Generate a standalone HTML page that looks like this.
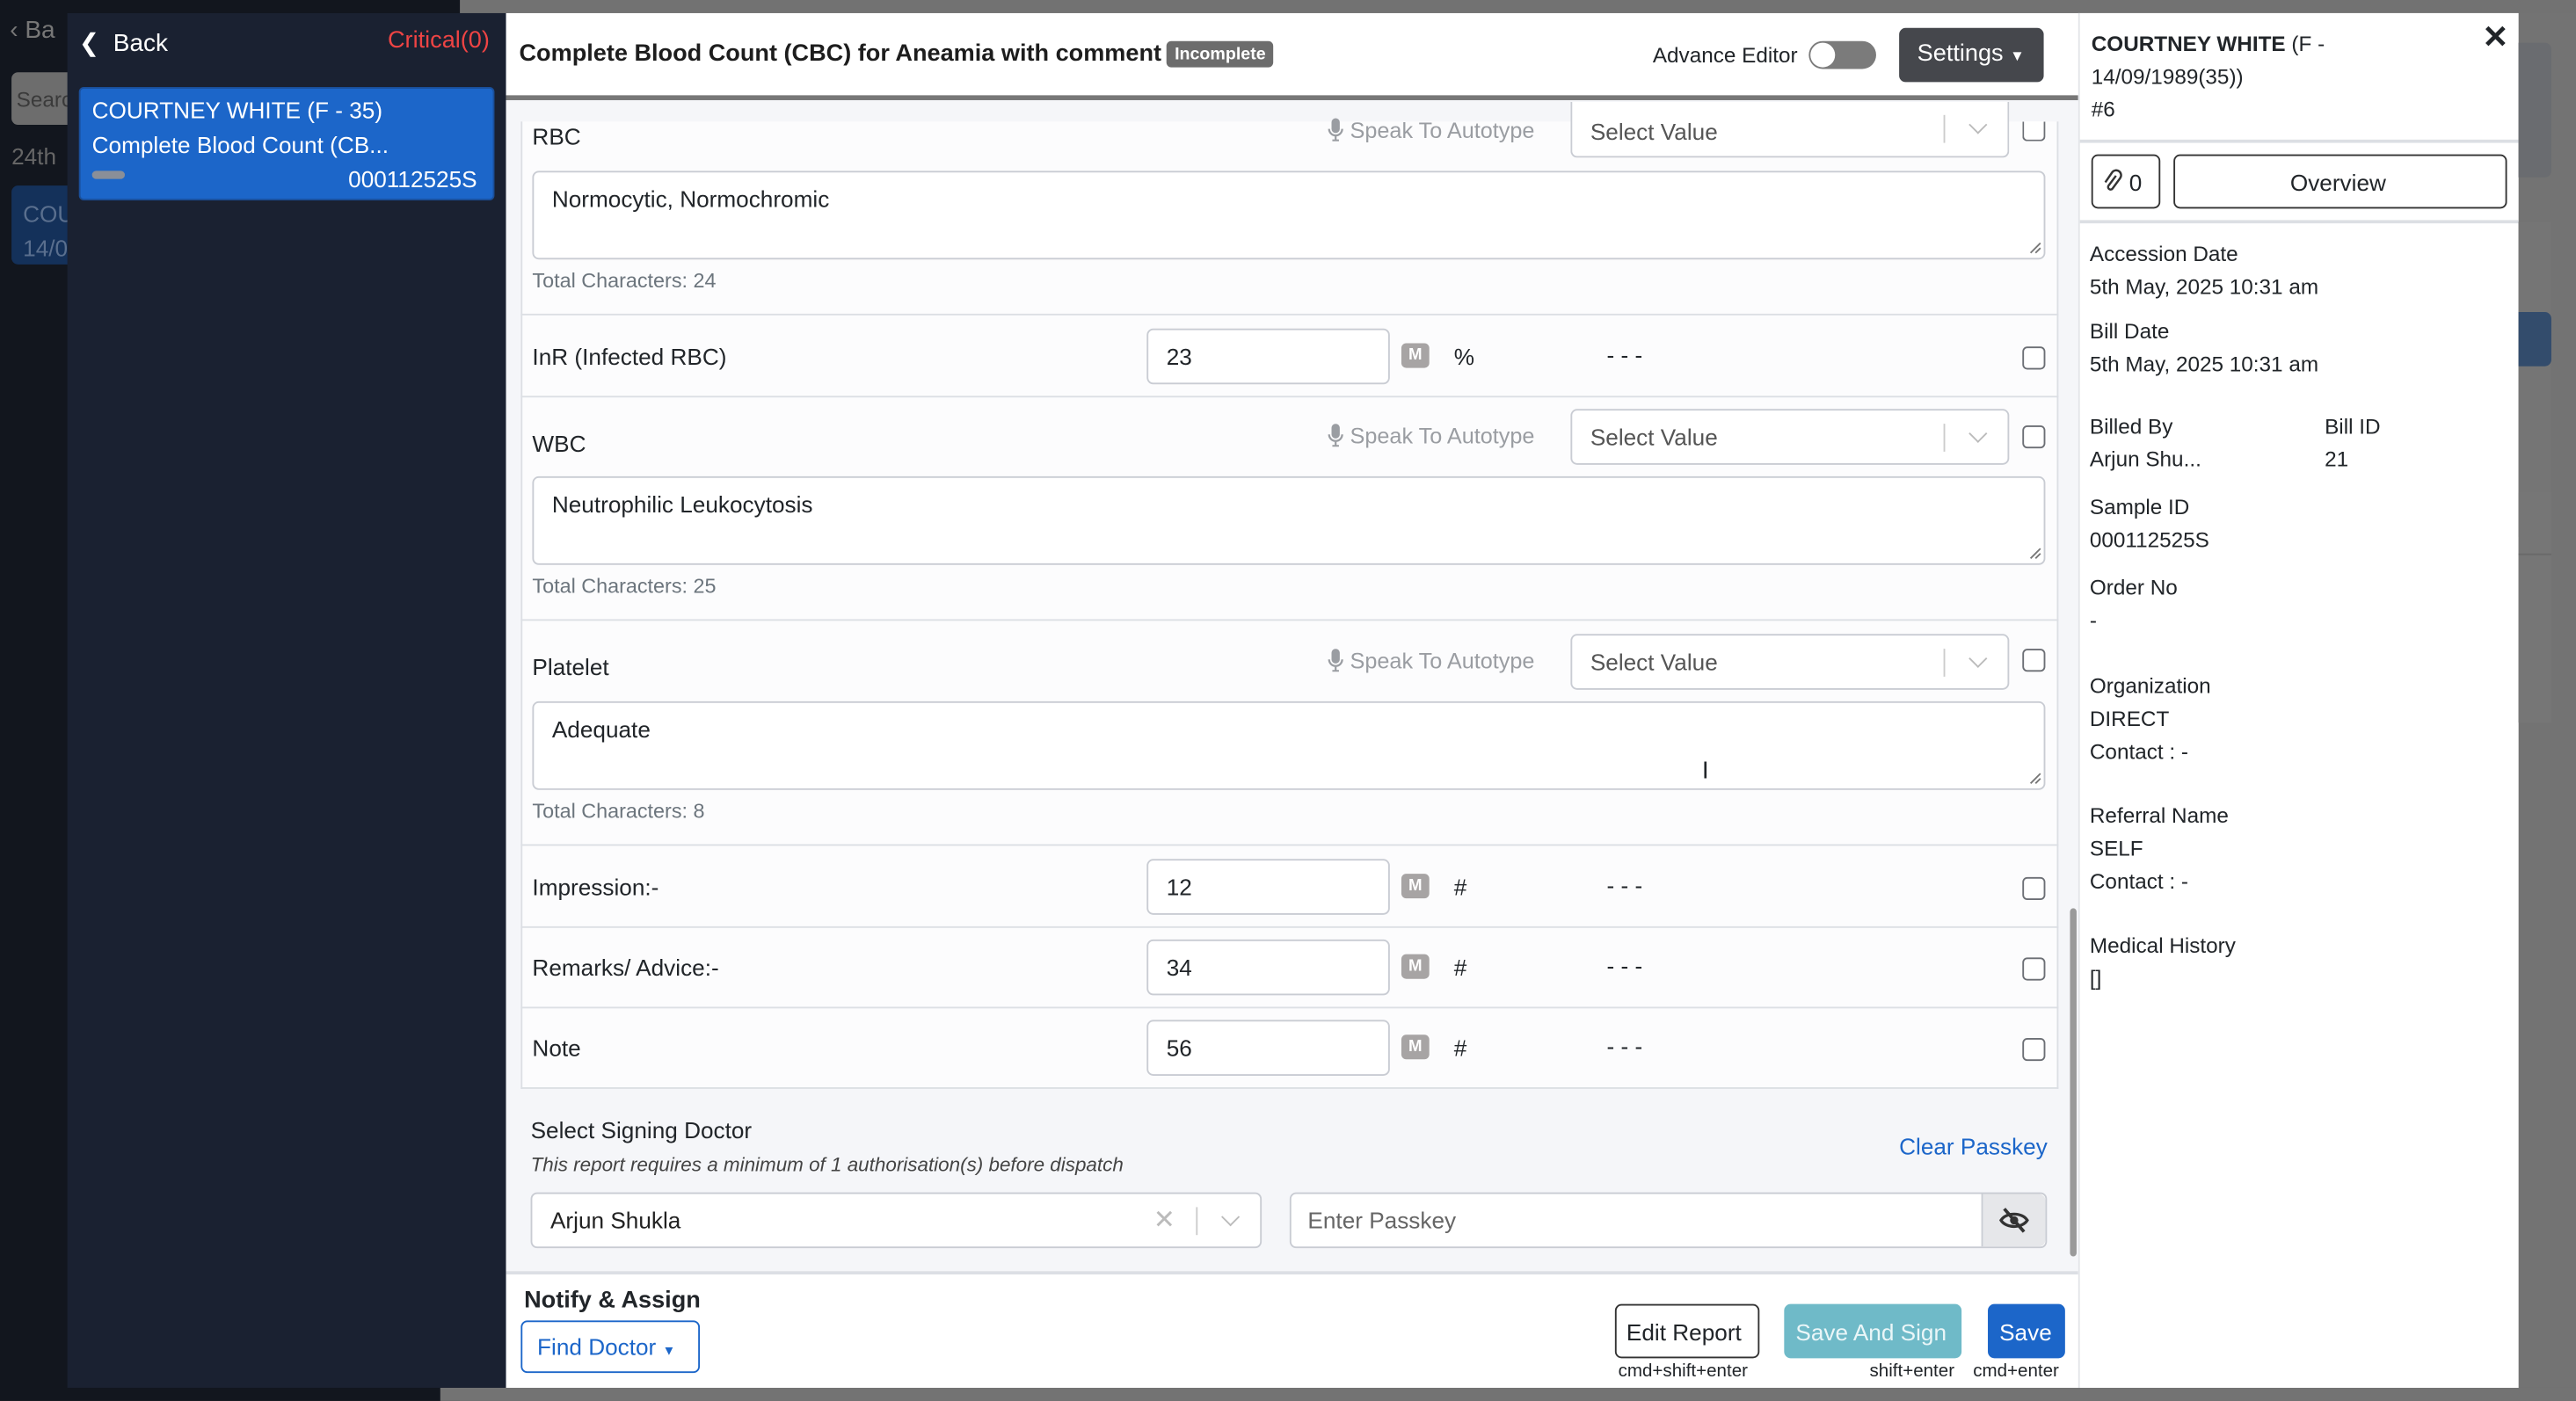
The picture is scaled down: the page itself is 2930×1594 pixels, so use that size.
<!DOCTYPE html>
<html><head><meta charset="utf-8"><style>
*{box-sizing:border-box;margin:0;padding:0}
body{width:2930px;height:1594px;overflow:hidden;background:#737373;font-family:"Liberation Sans",Arial,sans-serif}
#s{position:absolute;left:0;top:0;width:1568px;height:853px;transform:scale(1.868622);transform-origin:0 0;background:#737373;font-size:14px;color:#212529}
.a{position:absolute}
.t{position:absolute;white-space:nowrap}
.box{position:absolute;background:#fff;border:1px solid #c9ccd3;border-radius:4px}
.cb{position:absolute;width:14px;height:14px;border:1.3px solid #6c6f75;border-radius:3px;background:#fff}
.m{position:absolute;width:17px;height:15px;background:#a7a4a4;color:#fff;font-size:10px;font-weight:bold;border-radius:3px;text-align:center;line-height:15px}
.grey{color:#6c757d}
.sel{position:absolute;background:#fff;border:1px solid #c9ccd3;border-radius:4px;height:34px;width:267px}
.sel span{position:absolute;left:11px;top:8px;color:#555}
.sel i{position:absolute;right:38px;top:8px;width:1px;height:17px;background:#ccc}
.sel b{position:absolute;right:14px;top:10px;width:8px;height:8px;border-right:1.5px solid #bbb;border-bottom:1.5px solid #bbb;transform:rotate(45deg)}
.spk{position:absolute;color:#9a9da2;font-size:13.5px}
.hr{position:absolute;left:317px;width:936px;height:1px;background:#dcdfe4}
.rz{position:absolute;width:8px;height:8px}
</style></head><body><div id="s">
<div class="a" style="left:0;top:0;width:280px;height:853px;background:#12161e"></div>
<div class="a" style="left:268px;top:845px;width:1300px;height:8px;background:#737373"></div>
<div class="t" style="left:6px;top:10px;color:#777;font-size:15px">&#8249;&nbsp;Ba</div>
<div class="a" style="left:7px;top:44px;width:40px;height:32px;background:#6d6d6d;border-radius:4px"></div>
<div class="t" style="left:10px;top:53px;color:#3a3a3a;font-size:13px">Searc</div>
<div class="t" style="left:7px;top:87px;color:#666;font-size:14px">24th</div>
<div class="a" style="left:7px;top:113px;width:40px;height:48px;background:#14315a;border-radius:4px"></div>
<div class="t" style="left:14px;top:120px;color:#5a6f8e;font-size:14px;line-height:21px">COU<br>14/0</div>
<div class="a" style="left:280px;top:0;width:1288px;height:8px;background:#727272"></div>
<div class="a" style="left:41px;top:8px;width:268px;height:837px;background:#1a2131"></div>
<div class="t" style="left:48px;top:17px;color:#fff;font-size:15px">&#10094;&nbsp; Back</div>
<div class="t" style="left:236px;top:17px;color:#ef4444;font-size:14.5px">Critical(0)</div>
<div class="a" style="left:48px;top:53px;width:253px;height:69px;background:#1c66c9;border:1px solid #1a4f9a;border-radius:3px"></div>
<div class="t" style="left:56px;top:59px;color:#fff;font-size:14px">COURTNEY WHITE (F - 35)</div>
<div class="t" style="left:56px;top:80px;color:#fff;font-size:14px">Complete Blood Count (CB...</div>
<div class="a" style="left:56px;top:104px;width:20px;height:5px;background:#8a8f98;border-radius:3px"></div>
<div class="t" style="left:212px;top:101px;color:#fff;font-size:14px">000112525S</div>
<div class="a" style="left:308px;top:8px;width:1225px;height:837px;background:#fff"></div>
<div class="t" style="left:316px;top:25px;font-weight:bold;font-size:14.5px;color:#1d1d1d">Complete Blood Count (CBC) for Aneamia with comment</div>
<div class="t" style="left:710px;top:25px;background:#6c6c6c;color:#fff;font-size:10.5px;font-weight:bold;padding:2px 5px;border-radius:3px">Incomplete</div>
<div class="t" style="left:1006px;top:26px;font-size:13px">Advance Editor</div>
<div class="a" style="left:1101px;top:25px;width:41px;height:17px;background:#7b7b7b;border-radius:9px"></div>
<div class="a" style="left:1102px;top:26px;width:15px;height:15px;background:#fff;border-radius:50%"></div>
<div class="a" style="left:1156px;top:17px;width:88px;height:33px;background:#45474c;border-radius:4px"></div>
<div class="t" style="left:1167px;top:25px;color:#fff;font-size:14.5px">Settings <span style="font-size:9px">&#9660;</span></div>
<div class="a" style="left:308px;top:58px;width:957px;height:3px;background:#777"></div>
<div class="a" style="left:308px;top:61px;width:957px;height:714px;background:#f5f6f9;overflow:hidden">
 <div class="a" style="left:9px;top:13px;width:936px;height:589px;background:#fcfcfd;border:1px solid #dcdfe4;border-top:none"></div>
</div>
<div class="a" style="left:1260px;top:553px;width:4px;height:212px;background:#9a9a9a;border-radius:2px"></div>
<!-- RBC -->
<div class="t" style="left:324px;top:75px">RBC</div>
<div class="spk" style="left:808px;top:72px"><svg width="10" height="14" viewBox="0 0 10 14" style="vertical-align:-2px"><rect x="2.5" y="0" width="5" height="9" rx="2.5" fill="#9a9da2"/><path d="M1 6.5a4 4 0 0 0 8 0M5 10.5v3M3 13.5h4" stroke="#9a9da2" fill="none" stroke-width="1.2"/></svg> Speak To Autotype</div>
<div class="sel" style="left:956px;top:62px;border-top:none;border-radius:0 0 4px 4px"><span style="top:10px">Select Value</span><i></i><b></b></div>
<div class="cb" style="left:1231px;top:74px;border-top:none;height:12px;border-radius:0 0 3px 3px"></div>
<div class="box" style="left:324px;top:104px;width:921px;height:54px"></div>
<svg class="rz" style="left:1235px;top:147px" viewBox="0 0 8 8"><path d="M7 1L1 7M7 4L4 7" stroke="#777" stroke-width="1"/></svg>
<div class="t" style="left:336px;top:113px">Normocytic, Normochromic</div>
<div class="t grey" style="left:324px;top:164px;font-size:12.5px">Total Characters: 24</div>
<div class="hr" style="top:191px"></div>
<div class="t" style="left:324px;top:209px">InR (Infected RBC)</div>
<div class="box" style="left:698px;top:200px;width:148px;height:34px"></div><div class="t" style="left:710px;top:209px">23</div>
<div class="m" style="left:853px;top:209px">M</div><div class="t" style="left:885px;top:209px">%</div>
<div class="t" style="left:978px;top:208px">- - -</div><div class="cb" style="left:1231px;top:211px"></div>
<div class="hr" style="top:241px"></div>
<div class="t" style="left:324px;top:262px">WBC</div>
<div class="spk" style="left:808px;top:258px"><svg width="10" height="14" viewBox="0 0 10 14" style="vertical-align:-2px"><rect x="2.5" y="0" width="5" height="9" rx="2.5" fill="#9a9da2"/><path d="M1 6.5a4 4 0 0 0 8 0M5 10.5v3M3 13.5h4" stroke="#9a9da2" fill="none" stroke-width="1.2"/></svg> Speak To Autotype</div>
<div class="sel" style="left:956px;top:249px"><span>Select Value</span><i></i><b></b></div>
<div class="cb" style="left:1231px;top:259px"></div>
<div class="box" style="left:324px;top:290px;width:921px;height:54px"></div>
<svg class="rz" style="left:1235px;top:333px" viewBox="0 0 8 8"><path d="M7 1L1 7M7 4L4 7" stroke="#777" stroke-width="1"/></svg>
<div class="t" style="left:336px;top:299px">Neutrophilic Leukocytosis</div>
<div class="t grey" style="left:324px;top:350px;font-size:12.5px">Total Characters: 25</div>
<div class="hr" style="top:377px"></div>
<div class="t" style="left:324px;top:398px">Platelet</div>
<div class="spk" style="left:808px;top:395px"><svg width="10" height="14" viewBox="0 0 10 14" style="vertical-align:-2px"><rect x="2.5" y="0" width="5" height="9" rx="2.5" fill="#9a9da2"/><path d="M1 6.5a4 4 0 0 0 8 0M5 10.5v3M3 13.5h4" stroke="#9a9da2" fill="none" stroke-width="1.2"/></svg> Speak To Autotype</div>
<div class="sel" style="left:956px;top:386px"><span>Select Value</span><i></i><b></b></div>
<div class="cb" style="left:1231px;top:395px"></div>
<div class="box" style="left:324px;top:427px;width:921px;height:54px"></div>
<svg class="rz" style="left:1235px;top:470px" viewBox="0 0 8 8"><path d="M7 1L1 7M7 4L4 7" stroke="#777" stroke-width="1"/></svg>
<div class="t" style="left:336px;top:436px">Adequate</div>
<div class="t" style="left:1036px;top:461px;font-size:15px">I</div>
<div class="t grey" style="left:324px;top:487px;font-size:12.5px">Total Characters: 8</div>
<div class="hr" style="top:514px"></div>
<div class="t" style="left:324px;top:532px">Impression:-</div>
<div class="box" style="left:698px;top:523px;width:148px;height:34px"></div><div class="t" style="left:710px;top:532px">12</div>
<div class="m" style="left:853px;top:532px">M</div><div class="t" style="left:885px;top:532px">#</div>
<div class="t" style="left:978px;top:531px">- - -</div><div class="cb" style="left:1231px;top:534px"></div>
<div class="hr" style="top:564px"></div>
<div class="t" style="left:324px;top:581px">Remarks/ Advice:-</div>
<div class="box" style="left:698px;top:572px;width:148px;height:34px"></div><div class="t" style="left:710px;top:581px">34</div>
<div class="m" style="left:853px;top:581px">M</div><div class="t" style="left:885px;top:581px">#</div>
<div class="t" style="left:978px;top:580px">- - -</div><div class="cb" style="left:1231px;top:583px"></div>
<div class="hr" style="top:613px"></div>
<div class="t" style="left:324px;top:630px">Note</div>
<div class="box" style="left:698px;top:621px;width:148px;height:34px"></div><div class="t" style="left:710px;top:630px">56</div>
<div class="m" style="left:853px;top:630px">M</div><div class="t" style="left:885px;top:630px">#</div>
<div class="t" style="left:978px;top:629px">- - -</div><div class="cb" style="left:1231px;top:632px"></div>
<div class="t" style="left:323px;top:680px">Select Signing Doctor</div>
<div class="t" style="left:323px;top:702px;font-size:12px;font-style:italic;color:#444">This report requires a minimum of 1 authorisation(s) before dispatch</div>
<div class="t" style="left:1156px;top:690px;color:#1c66c9;font-size:14px">Clear Passkey</div>
<div class="sel" style="left:323px;top:726px;width:445px"><span style="color:#222">Arjun Shukla</span><i></i><b></b></div>
<div class="t" style="left:702px;top:733px;color:#bbb;font-size:16px">&#10005;</div>
<div class="box" style="left:785px;top:726px;width:461px;height:34px"></div>
<div class="t" style="left:796px;top:735px;color:#666">Enter Passkey</div>
<div class="a" style="left:1206px;top:727px;width:39px;height:32px;background:#e6e7ea;border-left:1px solid #c9ccd3;border-radius:0 4px 4px 0"></div>
<svg class="a" style="left:1216px;top:734px" width="20" height="18" viewBox="0 0 20 18"><path d="M2 9c3-5 13-5 16 0c-3 5-13 5-16 0z" fill="none" stroke="#333" stroke-width="1.8"/><circle cx="10" cy="9" r="2.5" fill="#333"/><path d="M4 2l12 14" stroke="#333" stroke-width="2"/></svg>
<div class="a" style="left:308px;top:774px;width:957px;height:2px;background:#dcdfe4"></div>
<div class="t" style="left:319px;top:784px;font-weight:bold;font-size:14.5px">Notify &amp; Assign</div>
<div class="a" style="left:317px;top:804px;width:109px;height:32px;border:1.3px solid #1c66c9;border-radius:4px"></div>
<div class="t" style="left:327px;top:812px;color:#1c66c9">Find Doctor <span style="font-size:8px">&#9660;</span></div>
<div class="a" style="left:983px;top:794px;width:88px;height:33px;border:1.3px solid #333;border-radius:4px"></div>
<div class="t" style="left:990px;top:803px">Edit Report</div>
<div class="a" style="left:1086px;top:794px;width:108px;height:33px;background:#6fbac8;border-radius:4px"></div>
<div class="t" style="left:1093px;top:803px;color:#eaf6f8">Save And Sign</div>
<div class="a" style="left:1210px;top:794px;width:47px;height:33px;background:#1c66c9;border-radius:4px"></div>
<div class="t" style="left:1217px;top:803px;color:#fff">Save</div>
<div class="t" style="left:985px;top:829px;font-size:11px">cmd+shift+enter</div>
<div class="t" style="left:1138px;top:829px;font-size:11px">shift+enter</div>
<div class="t" style="left:1201px;top:829px;font-size:11px">cmd+enter</div>
<div class="a" style="left:1265px;top:8px;width:268px;height:837px;background:#fff;border-left:1px solid #e3e5e9"></div>
<div class="t" style="left:1273px;top:17px;font-weight:bold;font-size:13px;line-height:20px">COURTNEY WHITE <span style="font-weight:normal">(F -</span><br><span style="font-weight:normal">14/09/1989(35))</span><br><span style="font-weight:normal">#6</span></div>
<div class="t" style="left:1511px;top:12px;font-size:19px;font-weight:bold">&#10005;</div>
<div class="a" style="left:1266px;top:85px;width:267px;height:2px;background:#dcdfe4"></div>
<div class="a" style="left:1273px;top:94px;width:42px;height:33px;border:1.3px solid #333;border-radius:4px"></div>
<svg class="a" style="left:1280px;top:103px" width="12" height="15" viewBox="0 0 12 15"><path d="M8 4L3.5 10a1.5 1.5 0 0 0 2.4 1.8L10.5 5.5a3 3 0 0 0-4.8-3.6L1.5 8" fill="none" stroke="#333" stroke-width="1.3"/></svg>
<div class="t" style="left:1296px;top:103px">0</div>
<div class="a" style="left:1323px;top:94px;width:203px;height:33px;border:1.3px solid #333;border-radius:4px"></div>
<div class="t" style="left:1394px;top:103px">Overview</div>
<div class="a" style="left:1266px;top:134px;width:267px;height:2px;background:#dcdfe4"></div>
<div class="t" style="left:1272px;top:145px;font-size:13px;line-height:20px">Accession Date<br>5th May, 2025 10:31 am</div>
<div class="t" style="left:1272px;top:192px;font-size:13px;line-height:20px">Bill Date<br>5th May, 2025 10:31 am</div>
<div class="t" style="left:1272px;top:250px;font-size:13px;line-height:20px">Billed By<br>Arjun Shu...</div>
<div class="t" style="left:1415px;top:250px;font-size:13px;line-height:20px">Bill ID<br>21</div>
<div class="t" style="left:1272px;top:299px;font-size:13px;line-height:20px">Sample ID<br>000112525S</div>
<div class="t" style="left:1272px;top:348px;font-size:13px;line-height:20px">Order No<br>-</div>
<div class="t" style="left:1272px;top:408px;font-size:13px;line-height:20px">Organization<br>DIRECT<br>Contact : -</div>
<div class="t" style="left:1272px;top:487px;font-size:13px;line-height:20px">Referral Name<br>SELF<br>Contact : -</div>
<div class="t" style="left:1272px;top:566px;font-size:13px;line-height:20px">Medical History<br>[]</div>
<div class="a" style="left:1533px;top:26px;width:20px;height:82px;background:#6a6c70;border-radius:0 4px 4px 0"></div>
<div class="a" style="left:1533px;top:135px;width:20px;height:192px;background:#757575"></div>
<div class="a" style="left:1533px;top:190px;width:20px;height:33px;background:#334c6c;border-radius:0 4px 4px 0"></div>
<div class="a" style="left:1533px;top:300px;width:20px;height:140px;background:#767676"></div>
<div class="a" style="left:1533px;top:337px;width:20px;height:1px;background:#6a6a6a"></div>
</div></body></html>
